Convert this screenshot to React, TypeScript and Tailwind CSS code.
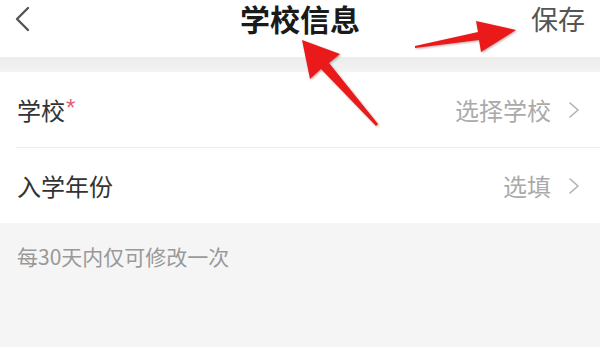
import React from 'react';

const font = { fontFamily: '"Noto Sans CJK SC", "Noto Sans", sans-serif' };

interface RowProps {
  label: string;
  value: string;
  required?: boolean;
}

function Chevron({ className }: { className?: string }) {
  return (
    <svg width="14" height="18" viewBox="0 0 14 18" className={className} fill="none">
      <path d="M3 2 L11 9 L3 16" stroke="currentColor" strokeWidth="1.6" strokeLinecap="round" strokeLinejoin="round" />
    </svg>
  );
}

function FormRow({ label, value, required }: RowProps) {
  return (
    <div className="flex h-[75px] items-center justify-between pl-[17px] pr-[19px]">
      <div className="flex items-start text-[24px] leading-[30px] text-[#333]">
        <span>{label}</span>
        {required && (
          <span className="ml-[1px] font-['Liberation_Sans',sans-serif] text-[24px] leading-[26px] text-[#e35d78]">*</span>
        )}
      </div>
      <div className="flex items-center gap-[16px] text-[#aaa]">
        <span className="text-[24px] leading-[30px]">{value}</span>
        <Chevron className="text-[#b0b0b0]" />
      </div>
    </div>
  );
}

export default function App() {
  return (
    <div className="relative h-[351px] w-[600px] overflow-hidden bg-[#f5f5f5]" style={font}>
      {/* Header */}
      <div className="h-[57px] bg-white">
        <div className="grid h-[37px] grid-cols-[1fr_auto_1fr] items-center px-[14px]">
          <div>
            <svg width="18" height="26" viewBox="0 0 18 26" fill="none" className="text-[#555]">
              <path d="M14 2 L3 13 L14 24" stroke="currentColor" strokeWidth="2.4" strokeLinecap="round" strokeLinejoin="round" />
            </svg>
          </div>
          <div className="text-[30px] font-bold leading-[37px] text-[#1a1a1a]">学校信息</div>
          <div className="pr-[1px] text-right text-[27px] leading-[37px] text-[#555]">保存</div>
        </div>
      </div>
      <div className="h-[15px] bg-gradient-to-b from-[#ececec] to-[#f3f3f3]" />

      {/* Form */}
      <div className="bg-white">
        <FormRow label="学校" value="选择学校" required />
        <div className="ml-[16px] h-px bg-[#ececec]" />
        <FormRow label="入学年份" value="选填" />
      </div>

      <div className="px-[17px] pt-[20px] text-[21px] leading-[26px] text-[#999]">每30天内仅可修改一次</div>

      <div className="absolute bottom-0 left-0 h-[4px] w-full bg-white" />

      {/* Annotation arrows */}
      <svg
        className="pointer-events-none absolute inset-0"
        width="600"
        height="351"
        viewBox="0 0 600 351"
        style={{ filter: 'drop-shadow(1px 1px 1px rgba(80,0,0,0.35))' }}
      >
        <polygon
          points="302,40 340,54 329,63 378,124 376,126 321,69 310,79"
          fill="#ea1a1a"
        />
        <polygon
          points="516,30 481,52 479,40 415,48 415,46 478,32 476,21"
          fill="#ea1a1a"
        />
      </svg>
    </div>
  );
}
